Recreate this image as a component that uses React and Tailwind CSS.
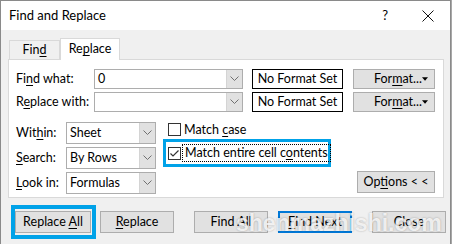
import React from 'react';

const U = ({ children }) => <span className="underline decoration-1 underline-offset-[2px]">{children}</span>;

const Chevron = () => (
  <svg width="9" height="6" viewBox="0 0 9 6" className="text-[#707070]">
    <path d="M0.5 0.5 L4.5 4.5 L8.5 0.5" fill="none" stroke="currentColor" strokeWidth="1" />
  </svg>
);

const Combo = ({ value, w, h }) => (
  <div className={`flex ${w} ${h} border border-[#adadad] bg-white`}>
    <div className="flex-1 flex items-center pl-[3px]">{value}</div>
    <div className="w-[16px] bg-[#e1e1e1] border-l border-[#d4d4d4] flex items-center justify-center">
      <Chevron />
    </div>
  </div>
);

const Btn = ({ children, w = 'w-[74px]', extra = '' }) => (
  <div className={`${w} h-[22px] bg-[#e1e1e1] border border-[#adadad] flex items-center justify-center ${extra}`}>
    <span className="whitespace-nowrap">{children}</span>
  </div>
);

const FormatBtn = () => (
  <div className="ml-[10px] w-[82px] h-[20px] bg-[#e1e1e1] border border-[#adadad] flex items-center">
    <span className="ml-[20px] whitespace-nowrap">For<U>m</U>at...</span>
    <svg width="7" height="4" viewBox="0 0 7 4" className="ml-auto mr-[6px]">
      <path d="M0 0 L7 0 L3.5 4 Z" fill="#000" />
    </svg>
  </div>
);

const Checkbox = ({ checked }) => (
  <div className="w-[13px] h-[13px] border border-[#333333] bg-white flex items-center justify-center shrink-0">
    {checked && (
      <svg width="11" height="11" viewBox="0 0 11 11">
        <path d="M1.5 5.5 L4 8 L9.5 2.5" fill="none" stroke="#333333" strokeWidth="1.2" />
      </svg>
    )}
  </div>
);

export default function App() {
  return (
    <div className="relative w-[452px] h-[244px] overflow-hidden bg-[#a8a8a8] text-[12.5px] text-black font-['Lato','Noto_Sans',sans-serif] leading-none">
      <div className="w-[451px] h-[250px] border-l border-t border-r border-[#8a8a8a] bg-[#f0f0f0] flex flex-col">
        {/* title bar */}
        <div className="h-[29px] bg-white flex items-center pl-[8px] pr-[16px]">
          <span className="text-[13px]">Find and Replace</span>
          <span className="ml-auto mr-[34px] text-[13px]">?</span>
          <svg width="12" height="12" viewBox="0 0 12 12">
            <path d="M0.5 0.5 L11.5 11.5 M11.5 0.5 L0.5 11.5" stroke="#111" strokeWidth="1" />
          </svg>
        </div>

        <div className="pl-[7px] pt-[8px] flex flex-col">
          {/* tabs */}
          <div className="flex items-end h-[21px] pl-[1px]">
            <div className="w-[51px] h-[19px] border border-b-0 border-[#d9d9d9] bg-[#f0f0f0] flex items-center justify-center">
              <span>Fin<U>d</U></span>
            </div>
            <div className="relative z-10 -mb-px w-[60px] h-[22px] border border-b-0 border-[#d9d9d9] bg-white flex items-center justify-center">
              <span>Re<U>p</U>lace</span>
            </div>
          </div>

          {/* panel */}
          <div className="w-[436px] h-[139px] border border-[#d9d9d9] bg-white pt-[9px] pl-[7px] pr-[8px] flex flex-col">
            <div className="flex items-center h-[20px]">
              <div className="w-[78px]">Fi<U>n</U>d what:</div>
              <Combo value="0" w="w-[149px]" h="h-[20px]" />
              <div className="ml-[9px] w-[91px] h-[20px] border border-black flex items-center justify-center">No Format Set</div>
              <FormatBtn />
            </div>
            <div className="flex items-center h-[20px] mt-[3px]">
              <div className="w-[78px]">R<U>e</U>place with:</div>
              <Combo value="" w="w-[149px]" h="h-[20px]" />
              <div className="ml-[9px] w-[91px] h-[20px] border border-black flex items-center justify-center">No Format Set</div>
              <FormatBtn />
            </div>

            <div className="flex mt-[10px] h-[72px]">
              <div className="flex flex-col gap-[3px]">
                <div className="flex items-center h-[22px]">
                  <div className="w-[50px]">Wit<U>h</U>in:</div>
                  <Combo value="Sheet" w="w-[90px]" h="h-[22px]" />
                </div>
                <div className="flex items-center h-[22px]">
                  <div className="w-[50px]"><U>S</U>earch:</div>
                  <Combo value="By Rows" w="w-[90px]" h="h-[22px]" />
                </div>
                <div className="flex items-center h-[22px]">
                  <div className="w-[50px]"><U>L</U>ook in:</div>
                  <Combo value="Formulas" w="w-[90px]" h="h-[22px]" />
                </div>
              </div>

              <div className="ml-[7px] flex flex-col">
                <div className="h-[17px] flex items-start pl-[5px] pt-[1px]">
                  <Checkbox />
                  <span className="ml-[3px] mt-[1px] whitespace-nowrap">Match <U>c</U>ase</span>
                </div>
                <div className="w-[168px] h-[28px] border-[3px] border-[#00a2e8] flex items-center pl-[2px]">
                  <Checkbox checked />
                  <div className="ml-[1px] h-[18px] px-[2px] border border-dotted border-black flex items-center">
                    <span className="whitespace-nowrap">Match entire cell c<U>o</U>ntents</span>
                  </div>
                </div>
              </div>

              <div className="ml-auto self-end mb-[1px]">
                <Btn w="w-[78px]">Op<U>t</U>ions &lt; &lt;</Btn>
              </div>
            </div>
          </div>

          {/* bottom buttons */}
          <div className="flex items-center mt-[7px] pl-[3px]">
            <div className="border-[4px] border-[#00a2e8] py-[2px] pr-[1px]">
              <Btn w="w-[76px]">Replace <U>A</U>ll</Btn>
            </div>
            <Btn w="w-[74px]" extra="ml-[4px]"><U>R</U>eplace</Btn>
            <Btn w="w-[74px]" extra="ml-[20px]">Find All</Btn>
            <Btn w="w-[74px]" extra="ml-[10px] !border-2 !border-[#0078d7]"><U>F</U>ind Next</Btn>
            <Btn w="w-[74px]" extra="ml-[20px]">Close</Btn>
          </div>
        </div>
      </div>

      <span className="absolute left-[236px] top-[212px] text-[23px] font-bold text-white/80 font-['Liberation_Sans',sans-serif] [text-shadow:0_0_2px_rgba(0,0,0,0.3)] whitespace-nowrap">
        shenmazhishi.com
      </span>
    </div>
  );
}
